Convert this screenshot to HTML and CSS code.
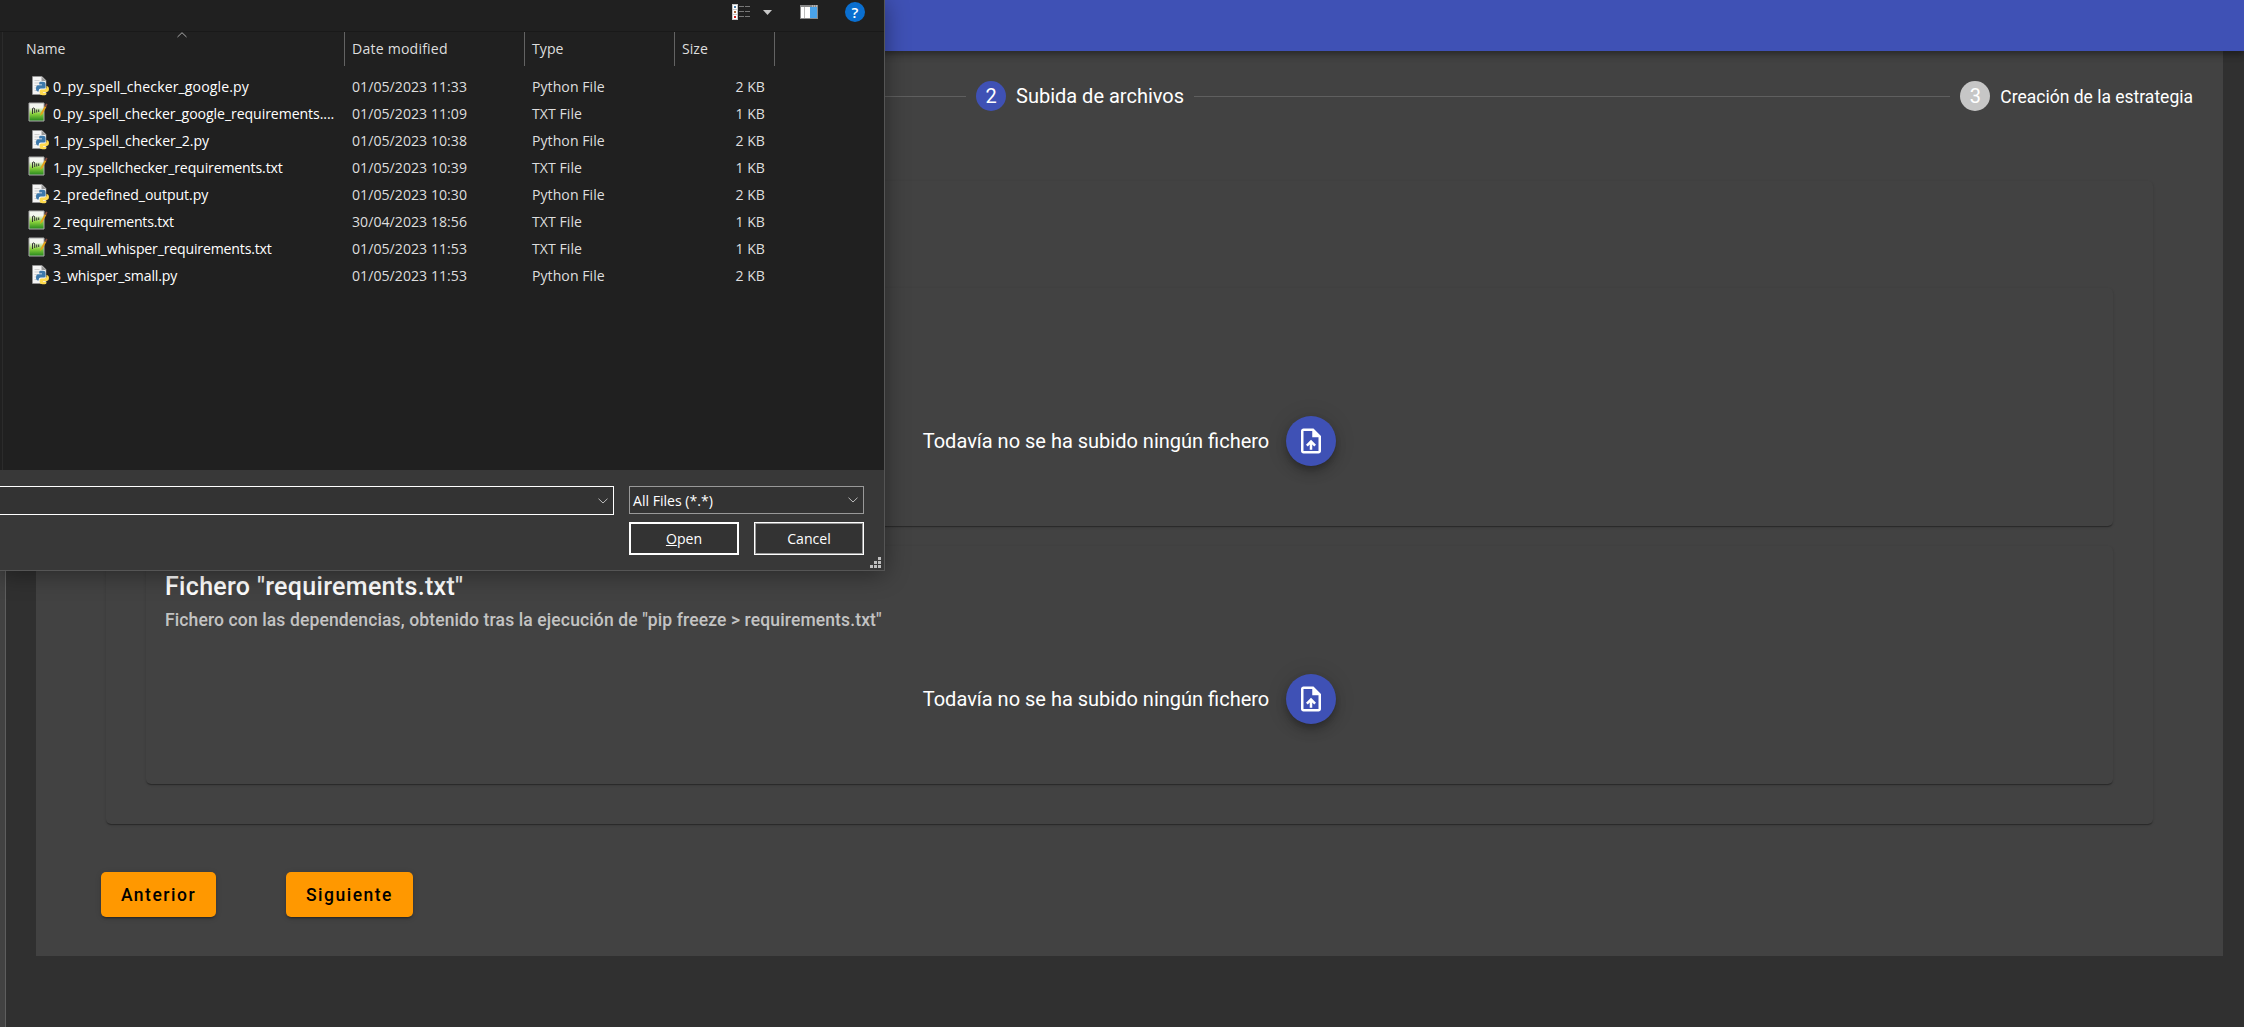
FILE: index.html
```html
<!DOCTYPE html>
<html lang="es">
<head>
<meta charset="utf-8">
<title>Subida de archivos</title>
<link rel="stylesheet" href="styles.css">
</head>
<body>
<svg class="defs" width="0" height="0">
  <symbol id="py" viewBox="0 0 20 20">
    <path d="M2.500.500h9.500l4 4v14H2.500z" fill="#f4f4f4" stroke="#999" stroke-width=".6"/>
    <path d="M11.500.500v4.500h4.500z" fill="#999"/>
    <path d="M4.500 4.500h5M4.500 7h5M4.500 9.500h3M4.500 12h2M4.500 14.500h2" stroke="#cfcfcf"/>
    <path d="M10.500 5.700h2.500q2.500 0 2.500 2.200v3q0 1.600-1.600 1.600h-3.200q-2 0-2 2v1H8Q6 15.500 6 12.500t2-3.200h4v-.8H9.200V7q0-1.200 1.300-1.300z" fill="#3c78aa"/>
    <path d="M15 19.300h-2.500Q9.700 19 9.700 17.200v-2q0-1.700 1.700-1.700h3q2.100 0 2.100-2V10H17q2 .3 2 3t-2 3h-4v.8h3.300v1.300q0 .9-1.300 1.200z" fill="#ffdb4f"/>
  </symbol>
  <symbol id="txt" viewBox="0 0 20 20">
    <linearGradient id="g" x1="0" y1="0" x2="0" y2="1"><stop offset=".25" stop-color="#f3f6f0"/><stop offset=".6" stop-color="#8ad23c"/><stop offset="1" stop-color="#23851c"/></linearGradient>
    <path d="M1 1h15v18H1z" fill="url(#g)" stroke="#aaa"/>
    <path d="M4.500 12V6.500q1.500-1.500 2.200.5v4M8.700 7.500v3M10.700 7.500v2.500" stroke="#333" fill="none"/>
    <path d="M12 14l.8-3 4-7 1.600 1-4 7z" fill="#e3a11b"/><path d="M16.800 4l1.200-2.500 1.500.8L18.400 5z" fill="#874b3d"/>
  </symbol>
  <symbol id="upload" viewBox="0 0 24 24">
    <path fill="#fff" d="M14 2H6c-1.100 0-1.990.9-1.990 2L4 20c0 1.100.89 2 1.990 2H18c1.100 0 2-.9 2-2V8l-6-6zm4 18H6V4h7v5h5v11zM8 15.010l1.410 1.410L11 14.840V19h2v-4.160l1.590 1.590L16 15.010 12.010 11z"/>
  </symbol>
</svg>

<div class="app">
  <header class="toolbar"></header>
  <div class="body">
    <aside class="drawer"></aside>
    <main class="panel">
      <div class="stepper">
        <span class="line first"></span>
        <div class="step"><span class="num on">2</span><span class="label active">Subida de archivos</span></div>
        <span class="line"></span>
        <div class="step"><span class="num">3</span><span class="label">Creación de la estrategia</span></div>
      </div>
      <section class="card outer">
        <section class="card inner">
          <div class="status">Todavía no se ha subido ningún fichero <button class="fab"><svg><use href="#upload"/></svg></button></div>
        </section>
        <section class="card inner">
          <div class="heading">
            <h2>Fichero "requirements.txt"</h2>
            <h3>Fichero con las dependencias, obtenido tras la ejecución de "pip freeze &gt; requirements.txt"</h3>
          </div>
          <div class="status">Todavía no se ha subido ningún fichero <button class="fab"><svg><use href="#upload"/></svg></button></div>
        </section>
      </section>
      <div class="actions"><button class="btn prev">Anterior</button><button class="btn next">Siguiente</button></div>
    </main>
  </div>
</div>

<div class="dialog">
  <div class="tools">
    <svg class="view" width="18" height="16"><path d="M0 0h6v16H0z" fill="#c8c8c8"/><path d="M1 1h4v4H1zM1 6h4v4H1zM1 11h4v4H1z" fill="#fff"/><path d="M2 2h2v2H2z" fill="#4a7ea8"/><path d="M2 7h2v2H2z" fill="#a8673c"/><path d="M2 12h2v2H2z" fill="#d02020"/><path d="M7 2.500h5M13 2.500h5M7 7.500h5M13 7.500h5M7 12.500h5M13 12.500h5" stroke="#777"/></svg>
    <svg class="caret" width="9" height="5"><path d="M0 0h9L4.500 5z" fill="#c8c8c8"/></svg>
    <svg class="pane" width="18" height="14"><path d="M0 0h18v14H0z" fill="#8a8a8a"/><path d="M1 2h9v11H1z" fill="#fff"/><path d="M4.500 2v11" stroke="#bbb"/><path d="M10 2h7v11h-7z" fill="#4aa3ea"/><path d="M12 1h1M14 1h1M16 1h1" stroke="#ddd"/></svg>
    <span class="help">?</span>
  </div>
  <div class="files">
    <div class="row head"><span>Name</span><span class="date">Date modified</span><span>Type</span><span>Size</span>
      <svg class="sort" width="10" height="6"><path d="M.5 5L5 .7 9.500 5" fill="none" stroke="#aaa"/></svg></div>
    <div class="row"><span class="name"><svg class="ico p"><use href="#py"/></svg><b class="f1">0_py_spell_checker_google.py</b></span><span>01/05/2023 11:33</span><span>Python File</span><span>2 KB</span></div>
    <div class="row"><span class="name"><svg class="ico"><use href="#txt"/></svg><b class="f2">0_py_spell_checker_google_requirements....</b></span><span>01/05/2023 11:09</span><span>TXT File</span><span>1 KB</span></div>
    <div class="row"><span class="name"><svg class="ico p"><use href="#py"/></svg><b class="f3">1_py_spell_checker_2.py</b></span><span>01/05/2023 10:38</span><span>Python File</span><span>2 KB</span></div>
    <div class="row"><span class="name"><svg class="ico"><use href="#txt"/></svg><b class="f4">1_py_spellchecker_requirements.txt</b></span><span>01/05/2023 10:39</span><span>TXT File</span><span>1 KB</span></div>
    <div class="row"><span class="name"><svg class="ico p"><use href="#py"/></svg><b class="f5">2_predefined_output.py</b></span><span>01/05/2023 10:30</span><span>Python File</span><span>2 KB</span></div>
    <div class="row"><span class="name"><svg class="ico"><use href="#txt"/></svg><b class="f6">2_requirements.txt</b></span><span>30/04/2023 18:56</span><span>TXT File</span><span>1 KB</span></div>
    <div class="row"><span class="name"><svg class="ico"><use href="#txt"/></svg><b class="f7">3_small_whisper_requirements.txt</b></span><span>01/05/2023 11:53</span><span>TXT File</span><span>1 KB</span></div>
    <div class="row"><span class="name"><svg class="ico p"><use href="#py"/></svg><b class="f8">3_whisper_small.py</b></span><span>01/05/2023 11:53</span><span>Python File</span><span>2 KB</span></div>
  </div>
  <div class="foot">
    <div class="fields">
      <div class="combo file"><svg width="10" height="6"><path d="M.5.7L5 5 9.500.7" fill="none" stroke="#bbb"/></svg></div>
      <div class="combo filter">All Files (*.*)<svg width="10" height="6"><path d="M.5.7L5 5 9.500.7" fill="none" stroke="#bbb"/></svg></div>
    </div>
    <div class="buttons"><button class="open"><u>O</u>pen</button><button class="cancel">Cancel</button></div>
  </div>
  <svg class="grip" width="11" height="11"><path d="M8 0h3v3H8zM4 4h3v3H4zM8 4h3v3H8zM0 8h3v3H0zM4 8h3v3H4zM8 8h3v3H8z" fill="#bfbfbf"/></svg>
</div>
</body>
</html>
```

FILE: styles.css
```css
* { box-sizing: border-box; }
body { margin: 0; height: 1027px; overflow: hidden; background: #303030; color: #fff; font-family: Roboto, sans-serif; position: relative; }
button { font: inherit; color: inherit; border: 0; margin: 0; padding: 0; }
.defs { position: absolute; }
.app { height: 1027px; display: flex; flex-direction: column; }
.toolbar { z-index: 1; height: 51px; flex: none; background: #3f51b5; position: relative; box-shadow: 0 2px 5px rgba(0,0,0,.2), 0 5px 6px rgba(0,0,0,.14), 0 1px 12px rgba(0,0,0,.12); }
.body { flex: 1; display: flex; }
.drawer { width: 6px; background: #424242; border-right: 1px solid #5e5e5e; }
.panel { margin: 0 21px 0 30px; flex: 1; height: 905px; background: #424242; }

.stepper { height: 90px; padding-right: 30px; display: flex; align-items: center; }
.line { flex: 1; height: 1px; background: #5f5f5f; margin-top: 1px; }
.line.first { flex: 0 0 930px; }
.step { display: flex; align-items: center; padding: 0 10px; }
.step:last-child { padding-right: 0; }
.num { width: 30px; height: 30px; border-radius: 50%; background: #c6c6c6; font-size: 20px; display: grid; place-items: center; margin-right: 10px; }
.num.on { background: #3f51b5; }
.label { font-size: 17.5px; line-height: 30px; padding-top: 1px; white-space: nowrap; }
.label.active { font-size: 20px; padding-top: 0; }

.card { border-radius: 5px; box-shadow: 0 2px 1px -1px rgba(0,0,0,.2), 0 1px 1px rgba(0,0,0,.14), 0 1px 3px rgba(0,0,0,.12); }
.outer { margin: 40px 70px 0; height: 643px; padding: 107px 40px 40px; display: flex; flex-direction: column; gap: 20px; }
.inner { height: 238px; padding: 20px; display: flex; flex-direction: column; justify-content: flex-end; }
.heading { height: 83px; margin-left: -1px; }
h2, h3 { margin: 0; font-weight: 500; white-space: nowrap; }
h2 { font-size: 25px; line-height: 42px; letter-spacing: .3125px; }
h3 { font-size: 17.5px; line-height: 25px; letter-spacing: .125px; color: rgba(255,255,255,.7); }
.status { height: 115px; padding-bottom: 15px; display: flex; justify-content: center; align-items: center; gap: 17px; font-size: 20px; }
.fab { width: 50px; height: 50px; border-radius: 50%; background: #3f51b5; display: grid; place-items: center; box-shadow: 0 4px 6px -1px rgba(0,0,0,.2), 0 7px 12px rgba(0,0,0,.14), 0 1px 22px rgba(0,0,0,.12); }
.fab svg { width: 30px; height: 30px; }
.actions { display: flex; gap: 70px; padding: 48px 65px 0; }
.btn { height: 45px; border-radius: 5px; background: #ff9800; color: #000; font-size: 17.5px; font-weight: 500; letter-spacing: 1.5px; box-shadow: 0 3px 1px -2px rgba(0,0,0,.2), 0 2px 2px rgba(0,0,0,.14), 0 1px 6px rgba(0,0,0,.12); }
.prev { width: 115px; }
.next { width: 127px; }

.dialog { position: absolute; z-index: 2; left: 0; top: 0; width: 885px; height: 571px; background: #383838; border-right: 1px solid #555; border-bottom: 1px solid #555; box-shadow: 0 3px 22px rgba(0,0,0,.4); font: 14.1px "Open Sans", sans-serif; display: flex; flex-direction: column; }
.tools { height: 32px; flex: none; background: #202020; border-bottom: 1px solid #191919; display: flex; padding-left: 732px; align-items: flex-start; }
.view { margin-top: 4px; }
.caret { margin: 10px 0 0 13px; }
.pane { margin: 5px 0 0 28px; }
.help { margin: 2px 0 0 27px; width: 20px; height: 20px; border-radius: 50%; background: #0a6fd0; display: grid; place-items: center; font-weight: 600; font-size: 15px; line-height: 20px; }
.files { height: 438px; flex: none; background: #202020; margin-left: 2px; border-left: 1px solid #2b2b2b; box-shadow: -2px 0 #202020; }
.row { height: 27px; display: grid; grid-template-columns: 349px 180px 150px 83px; color: #dedede; line-height: 27px; white-space: nowrap; letter-spacing: .04px; }
.row span:last-of-type { text-align: right; }
.name { display: flex; align-items: center; padding-left: 25px; }
.ico { width: 20px; height: 20px; margin-right: 5px; flex: none; margin-top: -4px; }
.ico.p { margin: -2px 3px 0 2px; }
b { font-weight: 400; color: #fff; }
.f1 { letter-spacing: .1px; }
.f2 { letter-spacing: -.07px; }
.f3, .f5 { letter-spacing: -.06px; }
.f4 { letter-spacing: -.14px; }
.f6 { letter-spacing: -.22px; }
.f7 { letter-spacing: -.17px; }
.f8 { letter-spacing: -.13px; }
.head { height: 32px; line-height: 34px; margin-bottom: 9px; position: relative; grid-template-columns: 342px 180px 150px 100px; }
.head span { border-right: 1px solid #636363; padding-left: 7px; }
.head .date { letter-spacing: .2px; }
.head span:first-child { padding-left: 23px; }
.head span:last-of-type { text-align: left; }
.sort { position: absolute; left: 174px; top: 0; }
.foot { padding: 16px 20px 0 0; }
.fields { display: flex; align-items: flex-start; gap: 15px; height: 36px; }
.combo { display: flex; align-items: center; justify-content: space-between; background: #333; border: 1px solid #999; padding: 0 5px 0 3px; }
.file { width: 614px; height: 29px; border: 1px solid #fff; border-left: 0; justify-content: flex-end; }
.filter { width: 235px; height: 28px; }
.buttons { display: flex; justify-content: flex-end; gap: 15px; }
.buttons button { width: 110px; height: 33px; background: #333; border: 2px solid #fff; }
.buttons .cancel { border: 1px solid #fff; box-shadow: inset 0 0 0 1px #999; }
.grip { position: absolute; right: 3px; bottom: 2px; }
```
